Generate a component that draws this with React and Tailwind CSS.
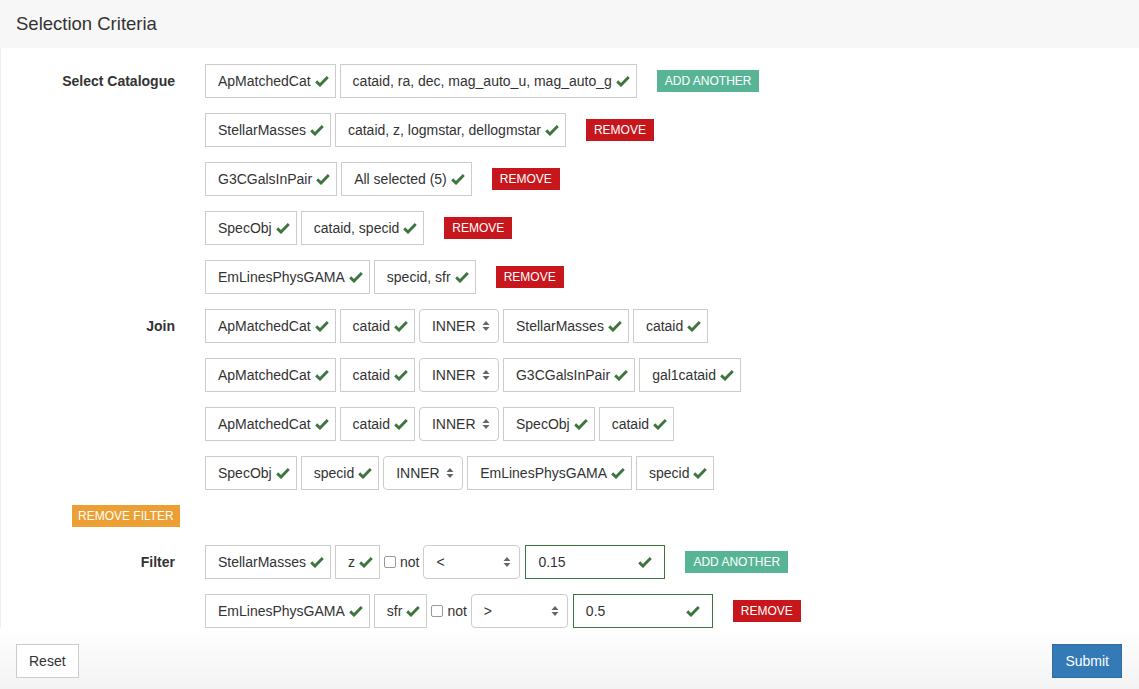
import React from "react";

const catalogueRows = [
  { table: "ApMatchedCat", cols: "cataid, ra, dec, mag_auto_u, mag_auto_g", add: true },
  { table: "StellarMasses", cols: "cataid, z, logmstar, dellogmstar" },
  { table: "G3CGalsInPair", cols: "All selected (5)" },
  { table: "SpecObj", cols: "cataid, specid" },
  { table: "EmLinesPhysGAMA", cols: "specid, sfr" },
];

const joinRows = [
  ["ApMatchedCat", "cataid", "StellarMasses", "cataid"],
  ["ApMatchedCat", "cataid", "G3CGalsInPair", "gal1cataid"],
  ["ApMatchedCat", "cataid", "SpecObj", "cataid"],
  ["SpecObj", "specid", "EmLinesPhysGAMA", "specid"],
];

const filterRows = [
  { table: "StellarMasses", col: "z", op: "<", value: "0.15", add: true },
  { table: "EmLinesPhysGAMA", col: "sfr", op: ">", value: "0.5" },
];

const Check = ({ className = "" }) => (
  <svg width="14" height="12" viewBox="0 0 14 12" className={className}>
    <path d="M1.2 6.4 L5 10 L12.8 2" fill="none" stroke="#3c763d" strokeWidth="2.9" strokeLinejoin="miter" />
  </svg>
);

const Box = ({ children }) => (
  <div className="h-[34px] flex items-center border border-[#ccc] bg-white pl-3 pr-[6px] whitespace-nowrap">
    <span>{children}</span>
    <Check className="ml-[4px]" />
  </div>
);

const Arrows = () => (
  <svg width="8" height="12" viewBox="0 0 8 12">
    <path d="M4 1 L7.5 5 L0.5 5 Z M4 11 L7.5 7 L0.5 7 Z" fill="#666" />
  </svg>
);

const Select = ({ value, width }) => (
  <div
    className={`h-[34px] flex items-center justify-between border border-[#ccc] rounded-[4px] bg-white pl-3 pr-[8px] ${width}`}
  >
    <span>{value}</span>
    <Arrows />
  </div>
);

const SmallBtn = ({ children, color }) => (
  <button className={`ml-4 h-[22px] px-[8px] text-[12px] leading-none text-white ${color}`}>
    {children}
  </button>
);

const Row = ({ label, children, last }) => (
  <div className={`flex items-center ${last ? "" : "mb-[15px]"}`}>
    <div className="w-[189px] pr-[15px] text-right font-bold">{label}</div>
    <div className="pl-[15px] flex items-center gap-1">{children}</div>
  </div>
);

export default function App() {
  return (
    <div className="w-[1139px] h-[689px] bg-white text-[14px] text-[#333] flex flex-col" style={{ fontFamily: '"Liberation Sans", Arial, sans-serif' }}>
      {/* Header */}
      <div className="h-[48px] shrink-0 bg-[#f7f7f7] flex items-center px-4">
        <h3 className="text-[18.5px] leading-none">Selection Criteria</h3>
      </div>

      {/* Body */}
      <div className="shrink-0 pt-[16px] border-l border-[#eee]">
        {catalogueRows.map((r, i) => (
          <Row key={i} label={i === 0 ? "Select Catalogue" : ""}>
            <Box>{r.table}</Box>
            <Box>{r.cols}</Box>
            {r.add ? (
              <SmallBtn color="bg-[#57b596]">ADD ANOTHER</SmallBtn>
            ) : (
              <SmallBtn color="bg-[#c7171d]">REMOVE</SmallBtn>
            )}
          </Row>
        ))}

        {joinRows.map((r, i) => (
          <Row key={i} label={i === 0 ? "Join" : ""}>
            <Box>{r[0]}</Box>
            <Box>{r[1]}</Box>
            <Select value="INNER" width="w-[80px]" />
            <Box>{r[2]}</Box>
            <Box>{r[3]}</Box>
          </Row>
        ))}

        <div className="pl-[71px] mb-[18px]">
          <button className="h-[22px] px-[6px] text-[12px] leading-none text-white bg-[#ec9f32]">
            REMOVE FILTER
          </button>
        </div>

        {filterRows.map((r, i) => (
          <Row key={i} label={i === 0 ? "Filter" : ""} last={i === filterRows.length - 1}>
            <Box>{r.table}</Box>
            <Box>{r.col}</Box>
            <label className="flex items-center gap-[4px]">
              <span className="w-[12px] h-[12px] border border-[#999] rounded-[2px] bg-white" />
              <span>not</span>
            </label>
            <Select value={r.op} width="w-[97px]" />
            <div className="w-[140px] h-[34px] ml-[1px] flex items-center justify-between border border-[#3c763d] pl-3 pr-[12px]">
              <span>{r.value}</span>
              <Check />
            </div>
            {r.add ? (
              <SmallBtn color="bg-[#57b596]">ADD ANOTHER</SmallBtn>
            ) : (
              <SmallBtn color="bg-[#c7171d]">REMOVE</SmallBtn>
            )}
          </Row>
        ))}
      </div>

      {/* Footer */}
      <div className="flex-1 bg-gradient-to-b from-white to-[#f3f3f3] flex items-start justify-between pt-[16px] px-4">
        <button className="h-[34px] px-3 border border-[#ccc] bg-white text-[#333]">Reset</button>
        <button className="h-[34px] px-3 border border-[#2e6da4] bg-[#337ab7] text-white mr-[1px]">Submit</button>
      </div>
    </div>
  );
}
